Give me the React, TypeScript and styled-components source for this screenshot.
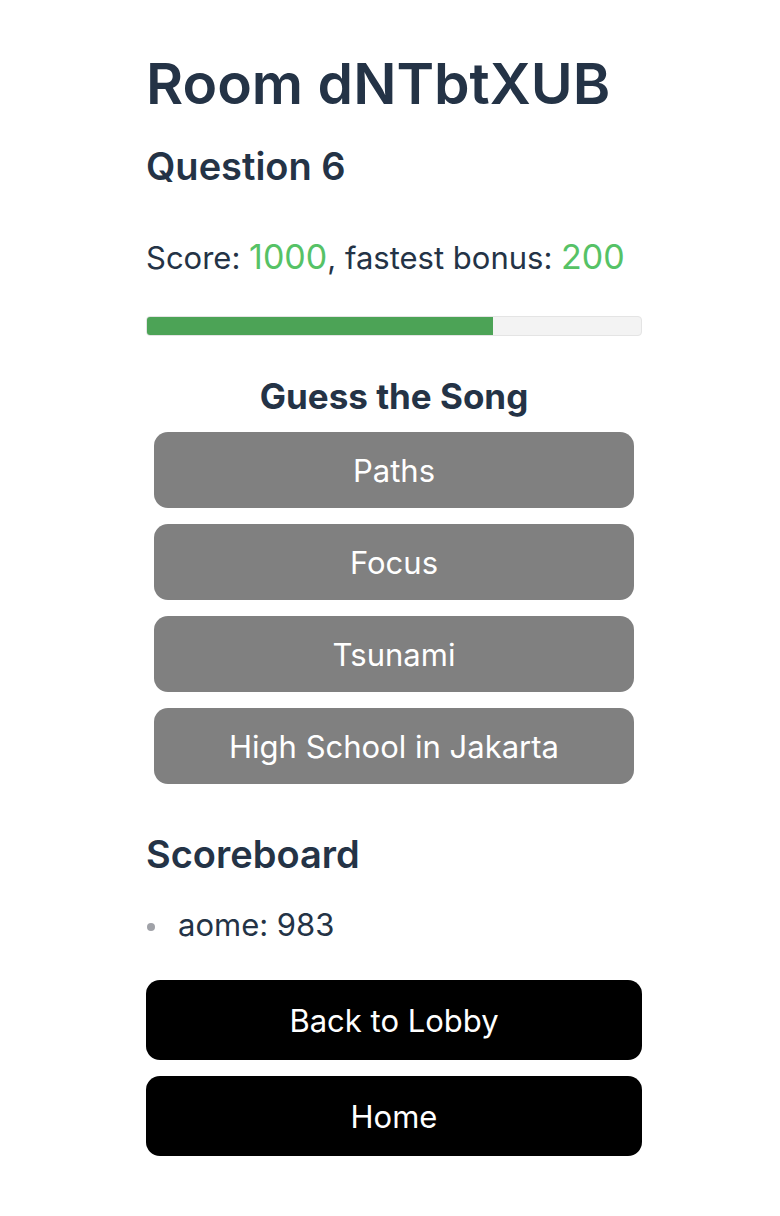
import styled, { createGlobalStyle } from "styled-components"

const GlobalStyle = createGlobalStyle`
  body {
    margin: 0;
    background: #ffffff;
    font-family: Inter, "Noto Sans", sans-serif;
    color: #243346;
  }
`

const Page = styled.main`
  width: 496px;
  padding: 48px 0 40px 146px;
  display: flex;
  flex-direction: column;
`

const Title = styled.h1`
  font-size: 57px;
  line-height: 72px;
  font-weight: 600;
  margin: 0;
`

const Subtitle = styled.h2`
  font-size: 38px;
  line-height: 46px;
  font-weight: 600;
  margin: 0;
`

const ScoreLine = styled.p`
  font-size: 31px;
  line-height: 40px;
  margin: 0;
`

const Points = styled.span`
  color: #56c266;
  font-size: 34px;
`

const Progress = styled.div`
  height: 20px;
  box-sizing: border-box;
  border: 1px solid #e4e4e4;
  border-radius: 4px;
  background: #f3f3f3;
  overflow: hidden;
`

const ProgressFill = styled.div`
  height: 100%;
  background: #4ca356;
`

const QuestionTitle = styled.h3`
  font-size: 35px;
  line-height: 42px;
  font-weight: 700;
  text-align: center;
  margin: 0;
`

const Options = styled.div`
  display: flex;
  flex-direction: column;
  gap: 16px;
  padding: 0 8px;
`

const Option = styled.button`
  height: 76px;
  border: none;
  border-radius: 14px;
  background: #808080;
  color: #ffffff;
  font-family: Inter, "Noto Sans", sans-serif;
  font-size: 31px;
`

const List = styled.ul`
  margin: 0;
  padding: 0;
  list-style: none;
  font-size: 31px;
  line-height: 40px;
`

const Player = styled.li`
  display: flex;
  align-items: center;
  &::before {
    content: "";
    width: 8px;
    height: 8px;
    margin: 4px 23px 0 1px;
    border-radius: 50%;
    background: #a0a2a8;
    flex: none;
  }
`

const Actions = styled.div`
  display: flex;
  flex-direction: column;
  gap: 16px;
`

const ActionButton = styled.button`
  height: 80px;
  border: none;
  border-radius: 14px;
  background: #000000;
  color: #ffffff;
  font-family: Inter, "Noto Sans", sans-serif;
  font-size: 31px;
`

const Spacer = styled.div<{ $h: number }>`
  height: ${(p) => p.$h}px;
  flex: none;
`

const options = ["Paths", "Focus", "Tsunami", "High School in Jakarta"]

export default function App() {
  const progress = 0.7
  return (
    <>
      <GlobalStyle />
      <Page>
        <Title>Room dNTbtXUB</Title>
        <Spacer $h={23} />
        <Subtitle>Question 6</Subtitle>
        <Spacer $h={48} />
        <ScoreLine>
          Score: <Points>1000</Points>, fastest bonus: <Points>200</Points>
        </ScoreLine>
        <Spacer $h={38} />
        <Progress>
          <ProgressFill style={{ width: `${progress * 100}%` }} />
        </Progress>
        <Spacer $h={39} />
        <QuestionTitle>Guess the Song</QuestionTitle>
        <Spacer $h={15} />
        <Options>
          {options.map((o) => (
            <Option key={o}>{o}</Option>
          ))}
        </Options>
        <Spacer $h={47} />
        <Subtitle>Scoreboard</Subtitle>
        <Spacer $h={28} />
        <List>
          <Player>aome: 983</Player>
        </List>
        <Spacer $h={35} />
        <Actions>
          <ActionButton>Back to Lobby</ActionButton>
          <ActionButton>Home</ActionButton>
        </Actions>
      </Page>
    </>
  )
}
